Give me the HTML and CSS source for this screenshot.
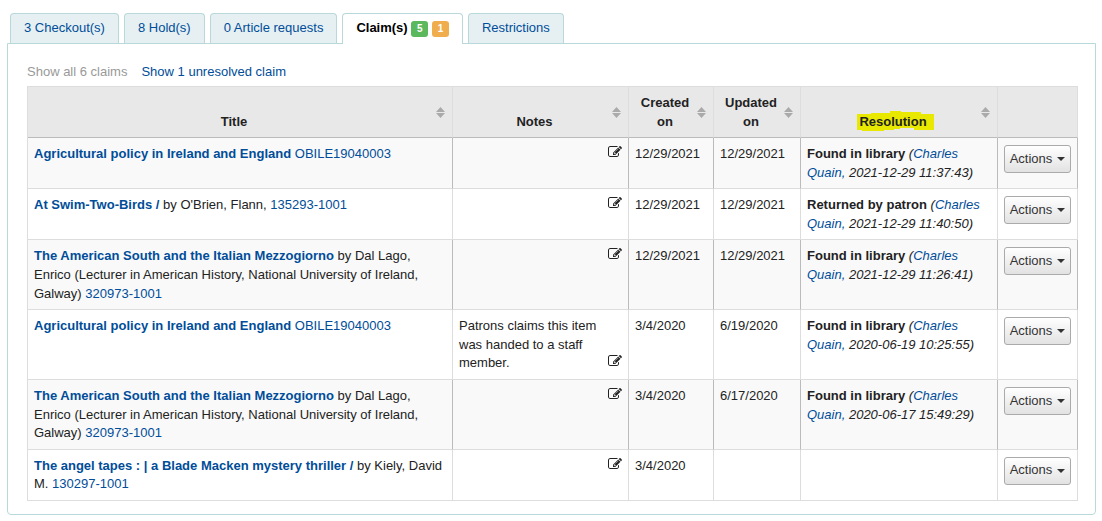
FILE: index.html
```html
<!DOCTYPE html>
<html lang="en">
<head>
<meta charset="utf-8">
<title>Patron claims</title>
<link rel="stylesheet" href="styles.css">
</head>
<body>
<svg class="defs" aria-hidden="true">
  <symbol id="edit" viewBox="0 0 1792 1792"><path d="M888 1184l116-116-152-152-116 116v56h96v96h56zm440-720q-16-16-33 1l-350 350q-17 17-1 33t33-1l350-350q17-17 1-33zm80 594v190q0 119-84.500 203.500t-203.500 84.500h-832q-119 0-203.500-84.500t-84.500-203.500v-832q0-119 84.500-203.500t203.500-84.500h832q63 0 117 25 15 7 18 23 3 17-9 29l-49 49q-14 14-32 8-23-6-45-6h-832q-66 0-113 47t-47 113v832q0 66 47 113t113 47h832q66 0 113-47t47-113v-126q0-13 9-22l64-64q15-15 35-7t20 29zm-96-738l288 288-672 672h-288v-288zm444 132l-92 92-288-288 92-92q28-28 68-28t68 28l152 152q28 28 28 68t-28 68z"/></symbol>
  <symbol id="sort" viewBox="0 0 9 11"><path d="M4.500 0L9 5H0zM4.500 11L0 6H9z"/></symbol>
</svg>
<nav class="tabs">
  <a class="tab" href="#checkouts">3 Checkout(s)</a>
  <a class="tab" href="#holds">8 Hold(s)</a>
  <a class="tab" href="#articles">0 Article requests</a>
  <a class="tab active" href="#claims">Claim(s) <span class="badge resolved">5</span> <span class="badge unresolved">1</span></a>
  <a class="tab" href="#restrictions">Restrictions</a>
</nav>
<main class="panel">
  <div class="filters">
    <a class="current">Show all 6 claims</a>
    <a href="#unresolved">Show 1 unresolved claim</a>
  </div>
  <table class="claims">
    <colgroup><col><col class="col-notes"><col class="col-created"><col class="col-updated"><col class="col-resolution"><col class="col-actions"></colgroup>
    <thead>
      <tr>
        <th>Title<svg class="sort"><use href="#sort"/></svg></th>
        <th>Notes<svg class="sort"><use href="#sort"/></svg></th>
        <th>Created on<svg class="sort"><use href="#sort"/></svg></th>
        <th>Updated on<svg class="sort"><use href="#sort"/></svg></th>
        <th><span class="marked"><svg class="marker" viewBox="0 0 77 20" aria-hidden="true"><path d="M0 3H14V2H33V0H44V1H64V3H77V19H57V17H43V18H37V19H27V20H5V19H0z"/></svg><span class="marked-text">Resolution</span></span><svg class="sort"><use href="#sort"/></svg></th>
        <th></th>
      </tr>
    </thead>
    <tbody>
      <tr>
        <td><a href="#t1"><b>Agricultural policy in Ireland and England</b></a> <a href="#i1">OBILE19040003</a></td>
        <td><a class="edit" href="#e1" aria-label="Edit notes"><svg><use href="#edit"/></svg></a></td>
        <td>12/29/2021</td><td>12/29/2021</td>
        <td><b>Found in library</b> <i>(<a href="#p">Charles Quain,</a> 2021-12-29 11:37:43)</i></td>
        <td><button class="actions" type="button">Actions <span class="caret"></span></button></td>
      </tr>
      <tr>
        <td><a href="#t2"><b>At Swim-Two-Birds /</b></a> by O'Brien, Flann, <a href="#i2">135293-1001</a></td>
        <td><a class="edit" href="#e2" aria-label="Edit notes"><svg><use href="#edit"/></svg></a></td>
        <td>12/29/2021</td><td>12/29/2021</td>
        <td><b>Returned by patron</b> <i>(<a href="#p">Charles Quain,</a> 2021-12-29 11:40:50)</i></td>
        <td><button class="actions" type="button">Actions <span class="caret"></span></button></td>
      </tr>
      <tr>
        <td><a href="#t3"><b>The American South and the Italian Mezzogiorno</b></a> by Dal Lago, Enrico (Lecturer in American History, National University of Ireland, Galway) <a href="#i3">320973-1001</a></td>
        <td><a class="edit" href="#e3" aria-label="Edit notes"><svg><use href="#edit"/></svg></a></td>
        <td>12/29/2021</td><td>12/29/2021</td>
        <td><b>Found in library</b> <i>(<a href="#p">Charles Quain,</a> 2021-12-29 11:26:41)</i></td>
        <td><button class="actions" type="button">Actions <span class="caret"></span></button></td>
      </tr>
      <tr>
        <td><a href="#t4"><b>Agricultural policy in Ireland and England</b></a> <a href="#i4">OBILE19040003</a></td>
        <td>Patrons claims this item was handed to a staff member. <a class="edit" href="#e4" aria-label="Edit notes"><svg><use href="#edit"/></svg></a></td>
        <td>3/4/2020</td><td>6/19/2020</td>
        <td><b>Found in library</b> <i>(<a href="#p">Charles Quain,</a> 2020-06-19 10:25:55)</i></td>
        <td><button class="actions" type="button">Actions <span class="caret"></span></button></td>
      </tr>
      <tr>
        <td><a href="#t5"><b>The American South and the Italian Mezzogiorno</b></a> by Dal Lago, Enrico (Lecturer in American History, National University of Ireland, Galway) <a href="#i5">320973-1001</a></td>
        <td><a class="edit" href="#e5" aria-label="Edit notes"><svg><use href="#edit"/></svg></a></td>
        <td>3/4/2020</td><td>6/17/2020</td>
        <td><b>Found in library</b> <i>(<a href="#p">Charles Quain,</a> 2020-06-17 15:49:29)</i></td>
        <td><button class="actions" type="button">Actions <span class="caret"></span></button></td>
      </tr>
      <tr>
        <td><a href="#t6"><b>The angel tapes : | a Blade Macken mystery thriller /</b></a> by Kiely, David M. <a href="#i6">130297-1001</a></td>
        <td><a class="edit" href="#e6" aria-label="Edit notes"><svg><use href="#edit"/></svg></a></td>
        <td>3/4/2020</td><td></td>
        <td></td>
        <td><button class="actions" type="button">Actions <span class="caret"></span></button></td>
      </tr>
    </tbody>
  </table>
</main>
</body>
</html>
```
FILE: styles.css
```css
* { box-sizing: border-box; }
body {
  margin: 0;
  padding: 13px 6px 0 7px;
  background: #fff;
  color: #222;
  font-family: "Liberation Sans", Arial, sans-serif;
  font-size: 13px;
  line-height: 1.43;
}
a { color: #004d99; text-decoration: none; }
.defs { display: none; }
.tabs { display: flex; gap: 5px; padding-left: 3px; }
.tab {
  height: 30px;
  padding: 5px 13px;
  border: 1px solid #b9d8d9;
  border-bottom: 0;
  border-radius: 4px 4px 0 0;
  background: #e6f0f2;
  white-space: nowrap;
}
.tab.active {
  position: relative;
  height: 31px;
  margin-bottom: -1px;
  background: #fff;
  color: #000;
  font-weight: bold;
}
.badge {
  display: inline-block;
  width: 17px;
  height: 16px;
  border-radius: 3px;
  color: #fff;
  font-size: 10px;
  font-weight: bold;
  line-height: 16px;
  text-align: center;
  vertical-align: middle;
}
.resolved { background: #5cb85c; }
.unresolved { background: #f0ad4e; }
.panel {
  padding: 19px 17px 13px 19px;
  border: 1px solid #b9d8d9;
  border-radius: 0 0 4px 4px;
}
.filters { display: flex; gap: 14px; height: 23px; }
.current { color: #999; }
.claims {
  width: 100%;
  table-layout: fixed;
  border-collapse: separate;
  border-spacing: 0;
  border-left: 1px solid #ddd;
}
.col-notes { width: 176px; }
.col-created { width: 85px; }
.col-updated { width: 87px; }
.col-resolution { width: 197px; }
.col-actions { width: 80px; }
th {
  position: relative;
  padding: 7px 18px 6px 6px;
  border-top: 1px solid #ddd;
  border-right: 1px solid #ddd;
  border-bottom: 1px solid #bbb;
  background: #e8e8e8;
  vertical-align: bottom;
}
.sort {
  position: absolute;
  top: 20px;
  right: 7px;
  width: 9px;
  height: 11px;
  fill: #aaa;
}
.marked { position: relative; }
.marker {
  position: absolute;
  top: -3px;
  left: -2px;
  width: 77px;
  height: 20px;
  fill: #e8e800;
}
.marked-text { position: relative; }
td {
  padding: 7px 6px 6px;
  border-right: 1px solid #ddd;
  border-bottom: 1px solid #ddd;
  vertical-align: top;
}
tbody tr:nth-child(odd) td { border-right-color: #bbb; background: #f9f9f9; }
.edit { float: right; }
.edit svg { display: block; width: 14px; height: 14px; fill: #222; }
.actions {
  display: flex;
  align-items: center;
  justify-content: center;
  gap: 5px;
  width: 67px;
  height: 28px;
  padding: 0;
  border: 1px solid #aaa;
  border-radius: 3px;
  background: linear-gradient(#fff, #e2e2e2);
  color: #333;
  font: inherit;
}
.caret {
  border-top: 4px solid #333;
  border-right: 4px solid transparent;
  border-left: 4px solid transparent;
}
```
